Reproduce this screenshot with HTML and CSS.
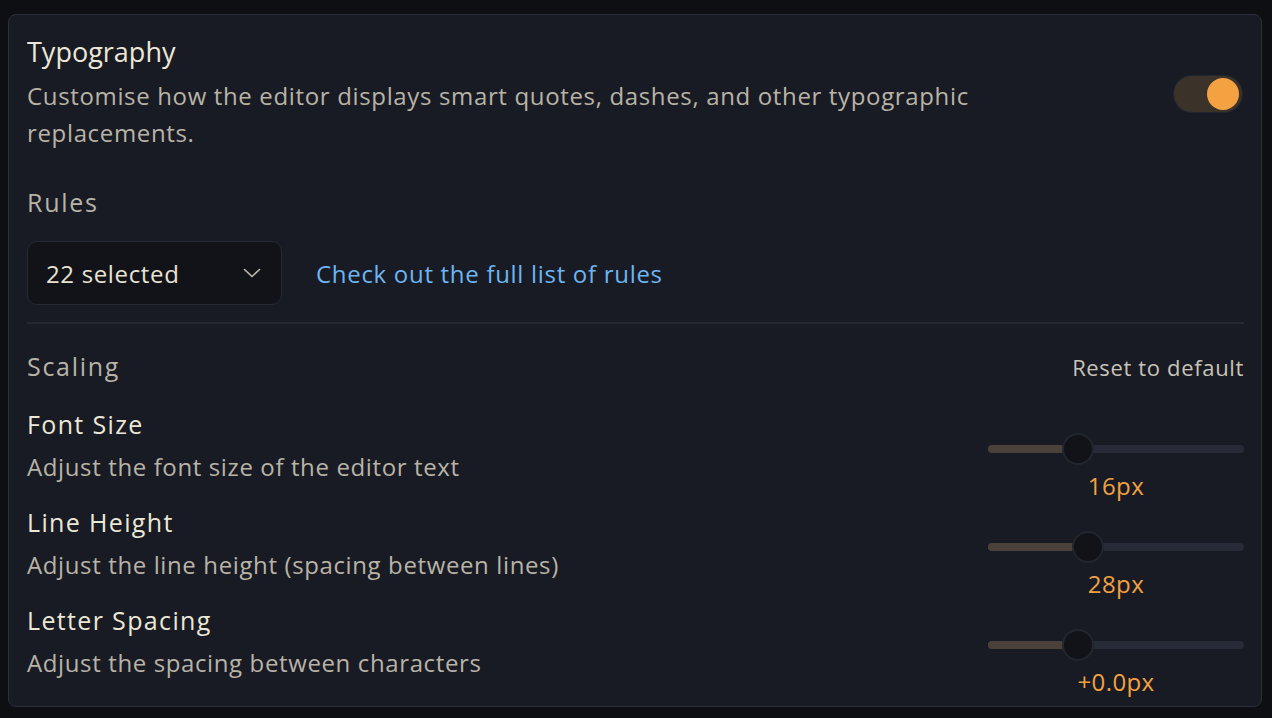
FILE: index.html
```html
<!DOCTYPE html>
<html>
<head>
<meta charset="utf-8">
<link rel="stylesheet" href="styles.css">
</head>
<body>
<div class="card">
  <div class="header">
    <div class="header-text">
      <h2 class="title">Typography</h2>
      <p class="desc">Customise how the editor displays smart quotes, dashes, and other typographic replacements.</p>
    </div>
    <div class="toggle"><span class="knob"></span></div>
  </div>

  <div class="rules">
    <div class="section-label">Rules</div>
    <div class="rules-row">
      <div class="select">
        <span>22 selected</span>
        <svg class="chevron" width="18" height="10" viewBox="0 0 18 10"><path d="M1.5 1.5 L9 8.5 L16.5 1.5" fill="none" stroke="#c4beb2" stroke-width="1.6" stroke-linecap="round" stroke-linejoin="round"/></svg>
      </div>
      <a class="link" href="#">Check out the full list of rules</a>
    </div>
  </div>

  <div class="divider"></div>

  <div class="scaling-head">
    <span class="section-label">Scaling</span>
    <span class="reset">Reset to default</span>
  </div>

  <div class="setting-row">
    <div class="setting-text">
      <div class="setting-title">Font Size</div>
      <div class="setting-desc">Adjust the font size of the editor text</div>
    </div>
    <div class="slider-col">
      <div class="slider" style="--v: 0.33">
        <div class="track"><div class="fill"></div></div>
        <div class="thumb"></div>
      </div>
      <div class="value">16px</div>
    </div>
  </div>

  <div class="setting-row">
    <div class="setting-text">
      <div class="setting-title">Line Height</div>
      <div class="setting-desc">Adjust the line height (spacing between lines)</div>
    </div>
    <div class="slider-col">
      <div class="slider" style="--v: 0.375">
        <div class="track"><div class="fill"></div></div>
        <div class="thumb"></div>
      </div>
      <div class="value">28px</div>
    </div>
  </div>

  <div class="setting-row">
    <div class="setting-text">
      <div class="setting-title">Letter Spacing</div>
      <div class="setting-desc">Adjust the spacing between characters</div>
    </div>
    <div class="slider-col">
      <div class="slider" style="--v: 0.33">
        <div class="track"><div class="fill"></div></div>
        <div class="thumb"></div>
      </div>
      <div class="value">+0.0px</div>
    </div>
  </div>
</div>
</body>
</html>
```

FILE: styles.css
```css
* { box-sizing: border-box; }

html, body {
  margin: 0;
  background: #0d0f13;
}

body {
  padding: 14px 10px 0 8px;
  font-family: "Open Sans", "Noto Sans", sans-serif;
  color: #b9b3a7;
}

.card {
  background: #181b23;
  border: 1px solid #2b303c;
  border-radius: 8px;
  padding: 21px 17px 8px 18px;
  height: 693px;
}

.header {
  display: flex;
  align-items: center;
  justify-content: space-between;
}

.title {
  margin: 0;
  font-size: 27px;
  line-height: 32px;
  font-weight: 500;
  color: #ece7d7;
}

.desc {
  margin: 9px 0 0;
  font-size: 24px;
  line-height: 37px;
  letter-spacing: 0.65px;
  max-width: 980px;
  color: #b9b3a7;
}

.toggle {
  width: 68px;
  height: 36px;
  border-radius: 18px;
  background: #3b322a;
  box-shadow: 0 0 0 1px #232733;
  display: flex;
  align-items: center;
  justify-content: flex-end;
  padding: 0 3px;
  margin-right: 2px;
}

.knob {
  width: 32px;
  height: 32px;
  border-radius: 50%;
  background: #f4a142;
}

.rules {
  margin-top: 35px;
}

.section-label {
  font-size: 25px;
  line-height: 32px;
  font-weight: 500;
  letter-spacing: 1.7px;
  color: #b9b3a7;
}

.rules-row {
  margin-top: 23px;
  display: flex;
  align-items: center;
  gap: 34px;
}

.select {
  width: 255px;
  height: 64px;
  background: #111318;
  border: 1px solid #262a35;
  border-radius: 10px;
  padding: 0 20px 0 18px;
  display: flex;
  align-items: center;
  justify-content: space-between;
  font-size: 24px;
  letter-spacing: 0.65px;
  color: #e8e3d3;
}

.link {
  font-size: 24px;
  letter-spacing: 0.7px;
  color: #6db5f2;
  text-decoration: none;
}

.divider {
  height: 2px;
  background: #242833;
  margin-top: 17px;
}

.scaling-head {
  margin-top: 26px;
  display: flex;
  align-items: baseline;
  justify-content: space-between;
}

.reset {
  font-size: 22px;
  letter-spacing: 0.65px;
  color: #c9c3b7;
}

.setting-row {
  display: grid;
  grid-template-columns: 1fr 256px;
  height: 98px;
}

.scaling-head + .setting-row {
  margin-top: 26px;
}

.setting-title {
  font-size: 25px;
  line-height: 32px;
  font-weight: 500;
  letter-spacing: 1.35px;
  color: #ece7d7;
}

.setting-desc {
  margin-top: 11px;
  font-size: 24px;
  line-height: 32px;
  letter-spacing: 0.62px;
  color: #b9b3a7;
}

.slider-col {
  padding-top: 25px;
  display: flex;
  flex-direction: column;
  align-items: center;
}

.slider {
  position: relative;
  width: 100%;
  height: 32px;
  display: flex;
  align-items: center;
}

.track {
  width: 100%;
  height: 8px;
  border-radius: 4px;
  background: #262b37;
  overflow: hidden;
}

.fill {
  height: 100%;
  width: calc(var(--v) * (100% - 32px) + 16px);
  background: #4a413b;
}

.thumb {
  position: absolute;
  top: 0;
  left: calc(var(--v) * (100% - 32px));
  width: 32px;
  height: 32px;
  border-radius: 50%;
  background: #111318;
  border: 2px solid #22262f;
}

.value {
  margin-top: 5px;
  font-size: 24px;
  line-height: 32px;
  letter-spacing: 0.4px;
  color: #f2a140;
}
```
